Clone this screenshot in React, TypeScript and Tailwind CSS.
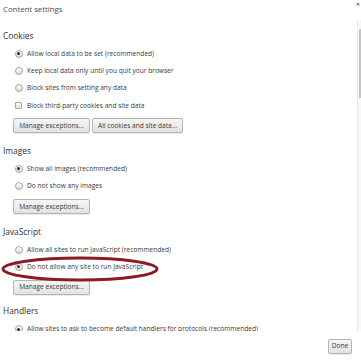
import React from 'react';

type Option = { label: string; checked?: boolean; kind?: 'radio' | 'checkbox' };

const Radio = ({ checked }: { checked?: boolean }) => (
    <span className="flex h-[8px] w-[8px] items-center justify-center rounded-full border border-[#a6a6a6] bg-gradient-to-b from-[#fdfdfd] to-[#dcdcdc]">
        {checked && <span className="h-[3px] w-[3px] rounded-full bg-[#2b2b2b]" />}
    </span>
);

const Checkbox = () => (
    <span className="h-[7px] w-[7px] rounded-[1px] border border-[#a6a6a6] bg-gradient-to-b from-[#fdfdfd] to-[#e0e0e0]" />
);

const Row = ({ label, checked, kind = 'radio' }: Option) => (
    <div className="flex h-[17.33px] items-center">
        <div className="flex w-[27px] justify-center pl-[10px]">
            {kind === 'radio' ? <Radio checked={checked} /> : <Checkbox />}
        </div>
        <span className="whitespace-nowrap text-[6.6px] text-[#3a3a3a]">{label}</span>
    </div>
);

const Btn = ({ children, w }: { children: React.ReactNode; w: string }) => (
    <button
        className={`flex h-[15px] items-center justify-center rounded-[2px] border border-[#b4b4b4] bg-gradient-to-b from-[#f6f6f6] to-[#e2e2e2] text-[6.6px] text-[#3a3a3a] shadow-[0_1px_0_rgba(0,0,0,0.08)] ${w}`}
    >
        {children}
    </button>
);

const Section = ({ title, rows, buttons, gap = 'mt-[12px]' }: { title: string; rows: Option[]; buttons?: React.ReactNode; gap?: string }) => (
    <div className={gap}>
        <div className="flex h-[12px] items-center pl-[3px] text-[8.4px] text-[#303030]">{title}</div>
        <div className="mt-[3px]">
            {rows.map((r) => (
                <Row key={r.label} {...r} />
            ))}
        </div>
        {buttons && <div className="mt-[4px] flex gap-[2px] pl-[13px]">{buttons}</div>}
    </div>
);

export default function App() {
    return (
        <div
            className="relative flex h-[360px] w-[361px] flex-col overflow-hidden bg-white"
            style={{ fontFamily: '"Open Sans", "Noto Sans", sans-serif' }}
        >
            {/* Title bar */}
            <div className="flex h-[20px] items-center pl-[3px] text-[7.8px] text-[#4a4a4a]">Content settings</div>
            <span className="absolute right-[1px] top-[0px] text-[7px] leading-[9px] text-[#333]">×</span>

            {/* Scrollable list, cut mid-row at the bottom */}
            <div className="flex h-[310.5px]">
                <div className="flex-1 overflow-hidden pt-[10px]">
                    <Section
                        gap=""
                        title="Cookies"
                        rows={[
                            { label: 'Allow local data to be set (recommended)', checked: true },
                            { label: 'Keep local data only until you quit your browser' },
                            { label: 'Block sites from setting any data' },
                            { label: 'Block third-party cookies and site data', kind: 'checkbox' },
                        ]}
                        buttons={
                            <>
                                <Btn w="w-[77px]">Manage exceptions...</Btn>
                                <Btn w="w-[91px]">All cookies and site data...</Btn>
                            </>
                        }
                    />
                    <Section
                        title="Images"
                        rows={[
                            { label: 'Show all images (recommended)', checked: true },
                            { label: 'Do not show any images' },
                        ]}
                        buttons={<Btn w="w-[77px]">Manage exceptions...</Btn>}
                    />
                    <Section
                        title="JavaScript"
                        rows={[
                            { label: 'Allow all sites to run JavaScript (recommended)' },
                            { label: 'Do not allow any site to run JavaScript', checked: true },
                        ]}
                        buttons={<Btn w="w-[77px]">Manage exceptions...</Btn>}
                    />
                    <Section
                        gap="mt-[11px]"
                        title="Handlers"
                        rows={[{ label: 'Allow sites to ask to become default handlers for protocols (recommended)', checked: true }]}
                    />
                </div>
                {/* Scrollbar */}
                <div className="flex w-[4px] flex-col items-center border-l border-[#e6e6e6] bg-[#f7f7f7]">
                    <div className="mt-[9px] h-[69px] w-[2px] bg-[#c6c6c6]" />
                </div>
            </div>

            {/* Footer */}
            <div className="flex flex-1 items-start justify-end pr-[9px] pt-[8px]">
                <Btn w="w-[24px]">Done</Btn>
            </div>

            {/* Red annotation ellipse */}
            <svg className="pointer-events-none absolute left-0 top-0" width="361" height="360">
                <ellipse cx="80" cy="269" rx="77" ry="11" fill="none" stroke="#8b1c26" strokeWidth="3" />
            </svg>
        </div>
    );
}
